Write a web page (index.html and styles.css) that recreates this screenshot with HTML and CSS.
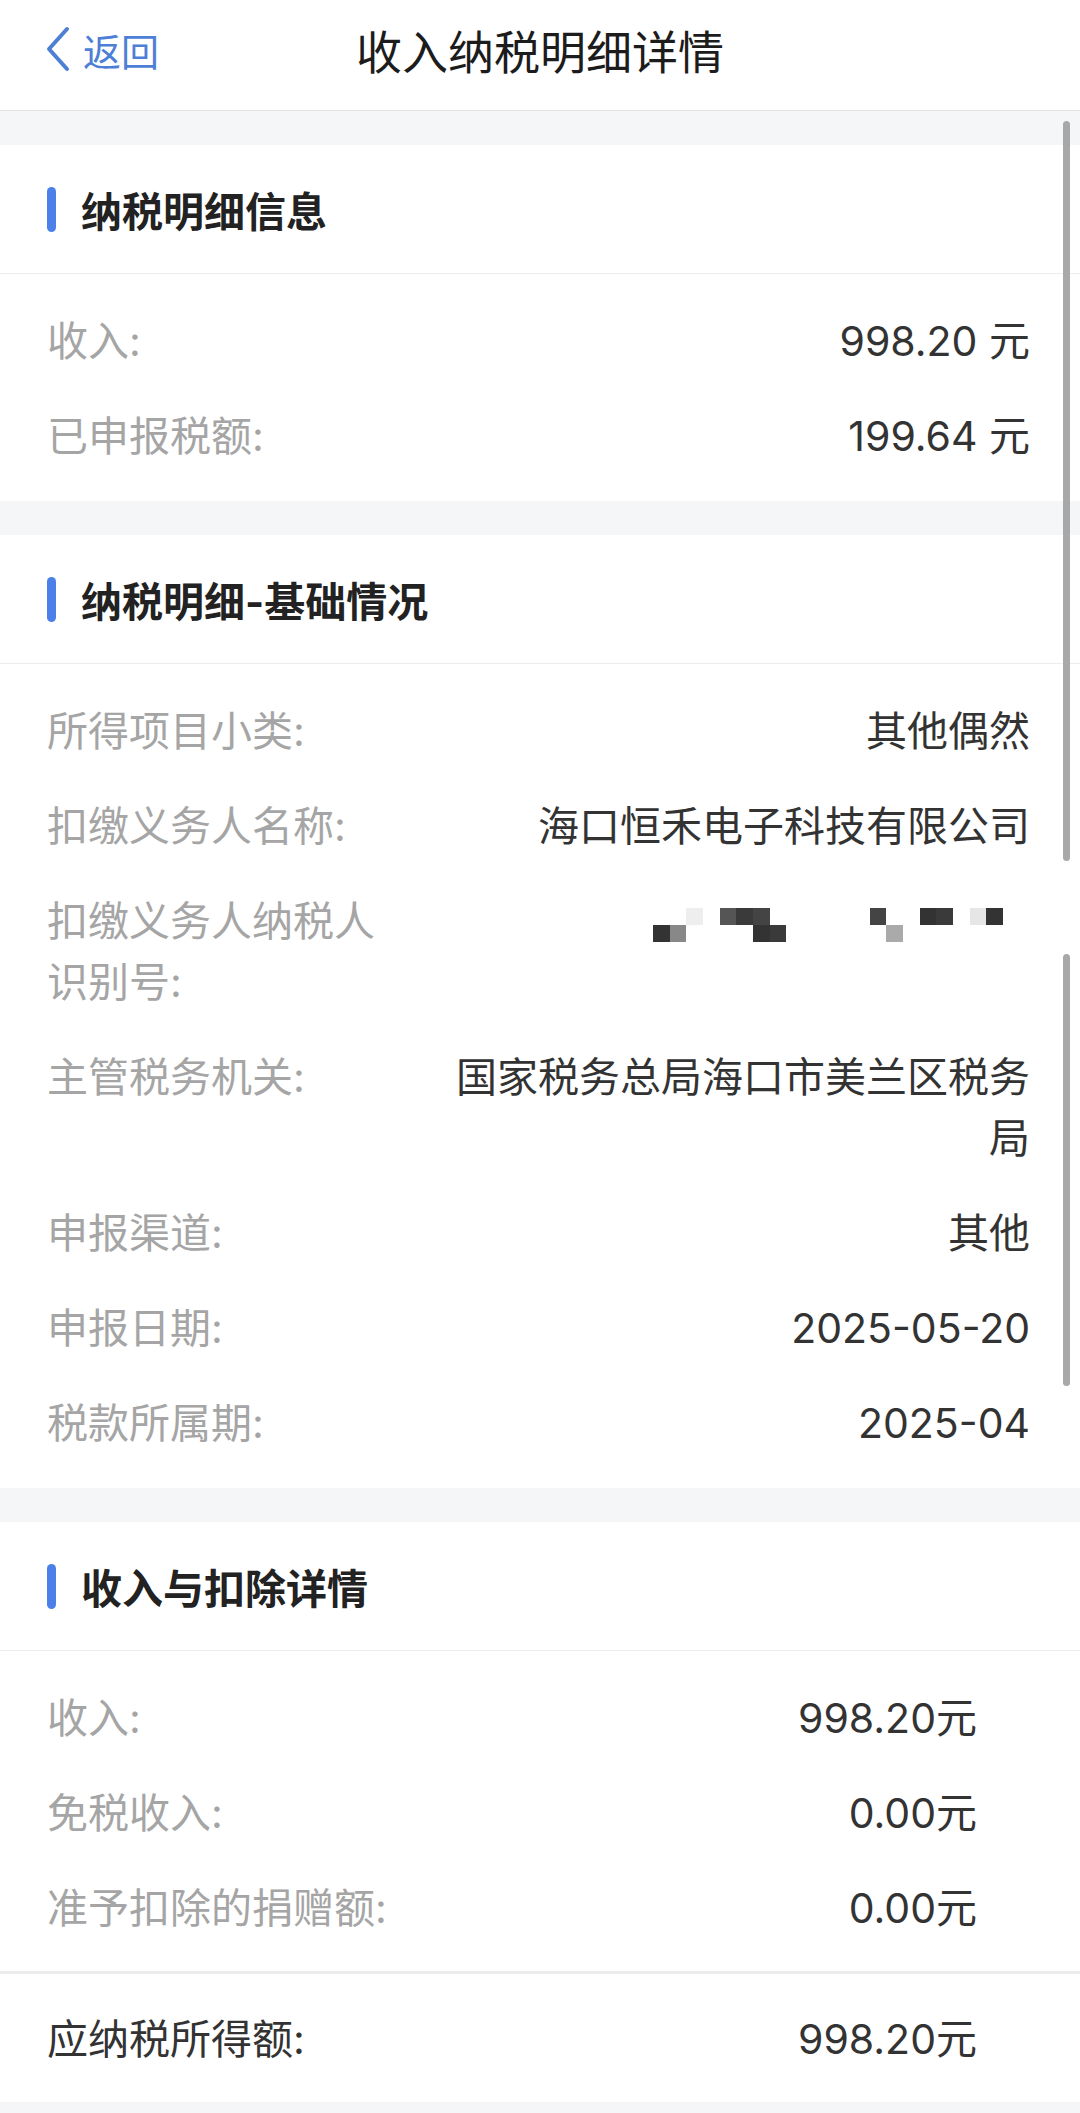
FILE: index.html
```html
<!DOCTYPE html>
<html lang="zh-CN">
<head>
    <meta charset="UTF-8">
    <meta name="viewport" content="width=device-width, initial-scale=1.0">
    <title>收入纳税明细详情</title>
    <link rel="stylesheet" href="styles.css">
</head>
<body>
    <div class="navbar">
        <a class="back" href="#">
            <svg class="back-icon" width="26" height="46" viewBox="0 0 26 46">
                <path d="M22 3 L4 23 L22 43" fill="none" stroke="#4d7fd6" stroke-width="4" stroke-linecap="round" stroke-linejoin="round"/>
            </svg>
            <span>返回</span>
        </a>
        <h1>收入纳税明细详情</h1>
        <div></div>
    </div>

    <div class="section">
        <h2 class="section-title">纳税明细信息</h2>
        <div class="rows">
            <div class="row">
                <div class="label">收入:</div>
                <div class="value">998.20 元</div>
            </div>
            <div class="row">
                <div class="label">已申报税额:</div>
                <div class="value">199.64 元</div>
            </div>
        </div>
    </div>

    <div class="section">
        <h2 class="section-title">纳税明细-基础情况</h2>
        <div class="rows">
            <div class="row">
                <div class="label">所得项目小类:</div>
                <div class="value">其他偶然</div>
            </div>
            <div class="row">
                <div class="label">扣缴义务人名称:</div>
                <div class="value">海口恒禾电子科技有限公司</div>
            </div>
            <div class="row">
                <div class="label">扣缴义务人纳税人识别号:</div>
                <div class="value">
                    <svg class="mosaic" width="350" height="34" viewBox="0 0 21 2" shape-rendering="crispEdges">
                        <rect x="2" y="0" width="1" height="1" fill="#eeeeee"/>
                        <rect x="4" y="0" width="1" height="1" fill="#555555"/>
                        <rect x="5" y="0" width="1" height="1" fill="#3a3a3a"/>
                        <rect x="6" y="0" width="1" height="1" fill="#444444"/>
                        <rect x="13" y="0" width="1" height="1" fill="#444444"/>
                        <rect x="16" y="0" width="1" height="1" fill="#333333"/>
                        <rect x="17" y="0" width="1" height="1" fill="#3a3a3a"/>
                        <rect x="19" y="0" width="1" height="1" fill="#e6e6e6"/>
                        <rect x="20" y="0" width="1" height="1" fill="#333333"/>
                        <rect x="0" y="1" width="1" height="1" fill="#333333"/>
                        <rect x="1" y="1" width="1" height="1" fill="#888888"/>
                        <rect x="6" y="1" width="1" height="1" fill="#333333"/>
                        <rect x="7" y="1" width="1" height="1" fill="#3a3a3a"/>
                        <rect x="14" y="1" width="1" height="1" fill="#aaaaaa"/>
                    </svg>
                </div>
            </div>
            <div class="row">
                <div class="label">主管税务机关:</div>
                <div class="value">国家税务总局海口市美兰区税务局</div>
            </div>
            <div class="row">
                <div class="label">申报渠道:</div>
                <div class="value">其他</div>
            </div>
            <div class="row">
                <div class="label">申报日期:</div>
                <div class="value">2025-05-20</div>
            </div>
            <div class="row">
                <div class="label">税款所属期:</div>
                <div class="value">2025-04</div>
            </div>
        </div>
    </div>

    <div class="section">
        <h2 class="section-title">收入与扣除详情</h2>
        <div class="rows rows-narrow">
            <div class="row">
                <div class="label">收入:</div>
                <div class="value">998.20元</div>
            </div>
            <div class="row">
                <div class="label">免税收入:</div>
                <div class="value">0.00元</div>
            </div>
            <div class="row">
                <div class="label">准予扣除的捐赠额:</div>
                <div class="value">0.00元</div>
            </div>
        </div>
        <div class="rows rows-narrow rows-total">
            <div class="row">
                <div class="label">应纳税所得额:</div>
                <div class="value">998.20元</div>
            </div>
        </div>
    </div>

    <div class="scrollbar scrollbar-top"></div>
    <div class="scrollbar scrollbar-bottom"></div>
</body>
</html>
```

FILE: styles.css
```css
body {
    font-family: Inter, "Noto Sans CJK SC", sans-serif;
    margin: 0;
    padding: 0 0 8px;
    background-color: #f5f6f8;
    color: #333;
    position: relative;
}

.navbar {
    background-color: #fff;
    height: 111px;
    border-bottom: 1px solid #e4e4e6;
    display: grid;
    grid-template-columns: 1fr auto 1fr;
    align-items: center;
    padding: 0 0 12px 45px;
    box-sizing: border-box;
}

.back {
    display: flex;
    align-items: center;
    gap: 12px;
    color: #4d7fd6;
    text-decoration: none;
    font-size: 38px;
}

.back-icon {
    display: block;
}

.navbar h1 {
    margin: 0;
    font-size: 46px;
    font-weight: 400;
    color: #1c1c1c;
    margin-left: -45px;
}

.section {
    background-color: #fff;
    margin-top: 34px;
}

.section-title {
    margin: 0;
    height: 128px;
    display: flex;
    align-items: center;
    padding-left: 47px;
    border-bottom: 1px solid #ededed;
    font-size: 41px;
    font-weight: 700;
    color: #222;
}

.section-title::before {
    content: "";
    width: 9px;
    height: 45px;
    border-radius: 5px;
    background-color: #4a80e8;
    margin-right: 25px;
}

.rows {
    padding: 20px 50px 17px 47px;
}

.rows-narrow {
    padding-right: 103px;
    padding-bottom: 15px;
}

.rows-total {
    border-top: 3px solid #ececec;
    padding-top: 18px;
}

.row {
    display: grid;
    grid-template-columns: 355px 1fr;
    column-gap: 30px;
    padding: 17px 0;
    font-size: 41px;
    line-height: 61px;
}

.label {
    color: #a5a5a5;
}

.value {
    color: #333;
    text-align: right;
}

.rows-total .label {
    color: #333;
}

.mosaic {
    vertical-align: middle;
    margin-right: 27px;
}

.scrollbar {
    position: absolute;
    right: 10px;
    width: 7px;
    border-radius: 4px;
    background-color: #a8a8a8;
}

.scrollbar-top {
    top: 121px;
    height: 740px;
}

.scrollbar-bottom {
    top: 954px;
    height: 432px;
}
```
